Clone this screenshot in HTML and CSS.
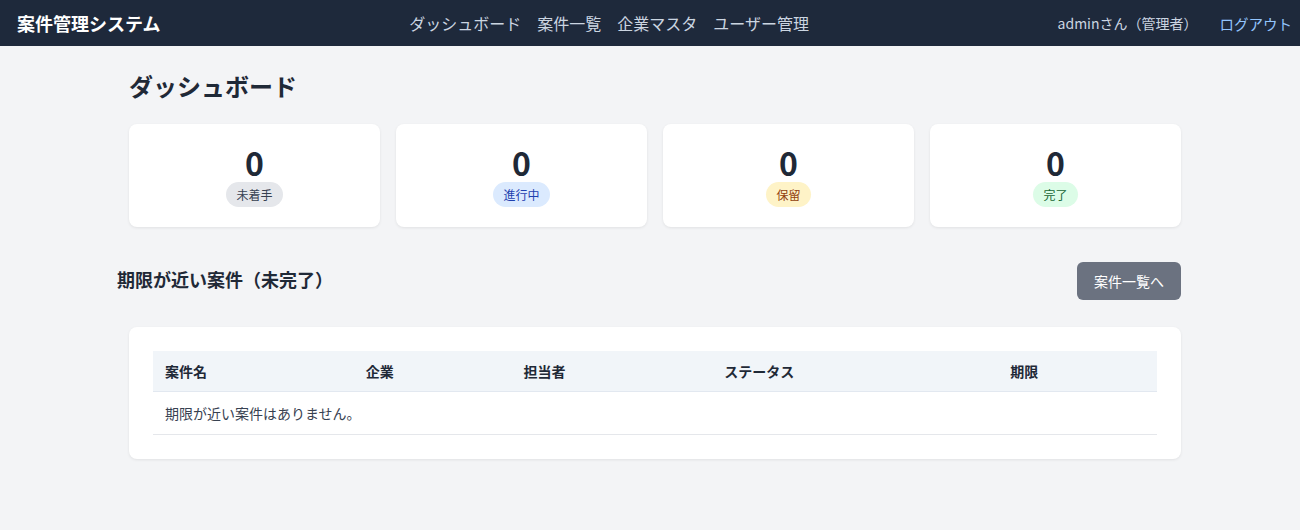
FILE: index.html
```html
<!DOCTYPE html>
<html lang="ja">

<head>
    <meta charset="UTF-8">
    <meta name="viewport" content="width=device-width, initial-scale=1.0">
    <title>ダッシュボード - 案件管理システム</title>
    <link rel="stylesheet" href="styles.css">
</head>

<body>
    <header class="navbar">
        <a class="brand" href="#">案件管理システム</a>
        <nav class="nav-links">
            <a href="#">ダッシュボード</a>
            <a href="#">案件一覧</a>
            <a href="#">企業マスタ</a>
            <a href="#">ユーザー管理</a>
        </nav>
        <div class="nav-user">
            <span class="user-name">adminさん（管理者）</span>
            <a class="logout" href="#">ログアウト</a>
        </div>
    </header>

    <main>
        <h1>ダッシュボード</h1>

        <div class="stats">
            <div class="stat-card">
                <div class="stat-num">0</div>
                <span class="badge badge-gray">未着手</span>
            </div>
            <div class="stat-card">
                <div class="stat-num">0</div>
                <span class="badge badge-blue">進行中</span>
            </div>
            <div class="stat-card">
                <div class="stat-num">0</div>
                <span class="badge badge-yellow">保留</span>
            </div>
            <div class="stat-card">
                <div class="stat-num">0</div>
                <span class="badge badge-green">完了</span>
            </div>
        </div>

        <div class="section-head">
            <h2>期限が近い案件（未完了）</h2>
            <a class="btn" href="#">案件一覧へ</a>
        </div>

        <div class="card">
            <table>
                <thead>
                    <tr>
                        <th class="col-name">案件名</th>
                        <th class="col-company">企業</th>
                        <th class="col-owner">担当者</th>
                        <th class="col-status">ステータス</th>
                        <th class="col-due">期限</th>
                    </tr>
                </thead>
                <tbody>
                    <tr>
                        <td colspan="5">期限が近い案件はありません。</td>
                    </tr>
                </tbody>
            </table>
        </div>
    </main>
</body>

</html>
```

FILE: styles.css
```css
body {
    font-family: "Noto Sans CJK JP", "Noto Sans", sans-serif;
    margin: 0;
    padding: 0;
    background-color: #f3f4f6;
    color: #1f2937;
}

a {
    text-decoration: none;
}

.navbar {
    background-color: #1e293b;
    height: 46px;
    padding: 0 8px 0 17px;
    display: flex;
    align-items: center;
    justify-content: space-between;
}

.brand {
    color: #fff;
    font-size: 18px;
    font-weight: bold;
}

.nav-links {
    display: flex;
    gap: 16px;
}

.nav-links a {
    color: #cbd5e1;
    font-size: 16px;
}

.nav-user {
    display: flex;
    align-items: center;
    gap: 22px;
    font-size: 14px;
}

.user-name {
    color: #cbd5e1;
}

.logout {
    color: #93c5fd;
    font-size: 14.5px;
}

main {
    padding: 24px 119px 40px 129px;
}

h1 {
    font-size: 24px;
    line-height: 32px;
    margin: 0 0 22px;
    color: #1f2937;
}

.stats {
    display: grid;
    grid-template-columns: repeat(4, 1fr);
    gap: 16px;
}

.stat-card {
    background-color: #fff;
    border-radius: 8px;
    box-shadow: 0 1px 3px rgba(0, 0, 0, 0.08);
    padding: 20px;
    text-align: center;
}

.stat-num {
    font-size: 32px;
    font-weight: bold;
    line-height: 1.15;
    color: #1f2937;
}

.badge {
    display: inline-block;
    font-size: 12px;
    line-height: 17px;
    padding: 4px 10px;
    border-radius: 999px;
}

.badge-gray {
    background-color: #e5e7eb;
    color: #374151;
}

.badge-blue {
    background-color: #dbeafe;
    color: #1e40af;
}

.badge-yellow {
    background-color: #fef3c7;
    color: #92400e;
}

.badge-green {
    background-color: #dcfce7;
    color: #166534;
}

.section-head {
    display: flex;
    align-items: center;
    justify-content: space-between;
    margin: 35px 0 27px;
}

.section-head h2 {
    font-size: 18px;
    line-height: 24px;
    margin: -3px 0 0 -12px;
    color: #1f2937;
}

.btn {
    background-color: #6b7280;
    color: #fff;
    font-size: 14px;
    line-height: 38px;
    padding: 0 17px;
    border-radius: 6px;
}

.card {
    background-color: #fff;
    border-radius: 8px;
    box-shadow: 0 1px 3px rgba(0, 0, 0, 0.08);
    padding: 24px;
}

table {
    width: 100%;
    border-collapse: collapse;
    table-layout: fixed;
    font-size: 14px;
}

th {
    text-align: left;
    background-color: #f1f5f9;
    border-bottom: 1px solid #e2e8f0;
    padding: 12px;
    line-height: 16px;
    color: #1f2937;
}

td {
    padding: 12px;
    line-height: 18px;
    border-bottom: 1px solid #e5e7eb;
    color: #374151;
}

.col-name {
    width: 20%;
}

.col-company {
    width: 15.2%;
}

.col-owner {
    width: 20%;
}

.col-status {
    width: 29.5%;
}

.col-due {
    width: 15.3%;
}
```
